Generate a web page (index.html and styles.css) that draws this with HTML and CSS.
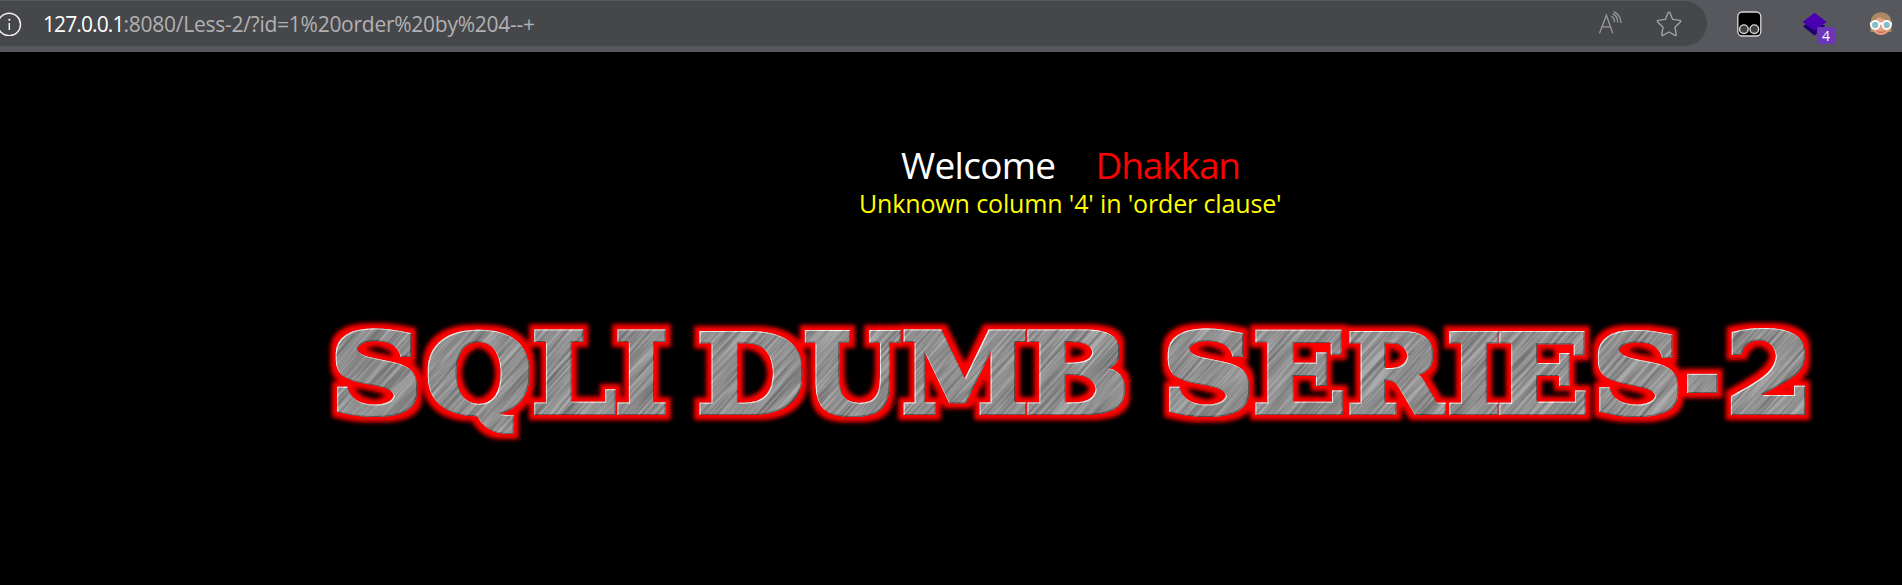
FILE: index.html
```html
<!DOCTYPE html>
<html lang="en">
<head>
<meta charset="utf-8">
<title>Less-2</title>
<link rel="stylesheet" href="styles.css">
</head>
<body>
<header class="toolbar">
  <div class="address">
    <svg class="info" width="22" height="26" viewBox="0 0 22 26"><circle cx="9.2" cy="14.500" r="11.300" fill="none" stroke="#f2f2f2" stroke-width="1.4"/><path d="M9.300 13v7" stroke="#f2f2f2" stroke-width="1.5"/><circle cx="9.300" cy="9.800" r="1.1" fill="#f2f2f2"/></svg>
    <div class="url"><span class="host">127.0.0.1</span><span class="path">:8080/Less-2/?id=1%20order%20by%204--+</span></div>
    <svg class="read" width="26" height="24" viewBox="0 0 26 24" fill="none" stroke="#98999b" stroke-width="1.3"><path d="M1.5 22.2 8.4 4.2l6.3 18M4 15.8h8.6M13.4 5.2c2.2 1.3 3.1 3.2 3.1 5.7M14.8 2.6c3.5 2 5 5 4.900 8.900M15.8.6c5 2.500 7 6.300 7.100 11.300"/></svg>
    <svg class="star" width="26" height="26" viewBox="0 0 26 26" fill="none" stroke="#a0a1a3" stroke-width="1.4" stroke-linejoin="round"><path d="M12.200 1.600Q13 .8 13.800 1.600L16.700 8.400 24 9.400Q25.200 10 24.300 11L19 16.200 20.300 23.600Q20.200 24.900 19 24.400L13 21 7 24.400Q5.800 24.900 5.700 23.600L7 16.200 1.700 11Q.8 10 2 9.400L9.300 8.400Z"/></svg>
  </div>
  <svg class="monkey" width="25" height="26" viewBox="0 0 25 26"><rect x=".8" y="1" width="23" height="24" rx="4.500" fill="#000" stroke="#d8d8d8" stroke-width="1.300"/><g fill="#3f4043" stroke="#d8d8d8" stroke-width="1.400"><circle cx="6.900" cy="18.200" r="4.300"/><circle cx="17.300" cy="18.200" r="4.300"/></g></svg>
  <div class="layers">
    <svg width="26" height="26" viewBox="0 0 26 26"><path d="M1 14.500 4 12l18 1 1 1-10.500 9.500Z" fill="#21006f"/><path d="M12.500.8 24.700 10 12.500 18.500.6 10Z" fill="#4a00b0"/></svg>
    <span class="badge">4</span>
  </div>
  <svg class="face" width="24" height="24" viewBox="0 0 24 24"><path d="M1.500 20V11C1.500-3.500 22.500-3.500 22.500 11v9Z" fill="#a98a62"/><path d="M3 10 10 5l11 5c1.500 8-3 13-9 13S1.500 18 3 10Z" fill="#e4a181"/><path d="M8 19.200q4 2.300 8 0" fill="none" stroke="#c96b50" stroke-width="1.300"/><path d="M1 11.500h22" stroke="#fff" stroke-width="2.200"/><g fill="#86bdc9" stroke="#fff" stroke-width="1.900"><circle cx="6.200" cy="13" r="4.100"/><circle cx="17.700" cy="13" r="4.100"/></g></svg>
</header>
<main class="page">
  <div class="greeting"><span class="welcome">Welcome</span><span class="name">Dhakkan</span></div>
  <p class="error">Unknown column '4' in 'order clause'</p>
  <svg class="banner" width="1902" height="150" viewBox="0 300 1902 150" role="img" aria-label="SQLI DUMB SERIES-2">
    <defs>
      <filter id="glow" filterUnits="userSpaceOnUse" x="300" y="300" width="1560" height="150" color-interpolation-filters="sRGB">
        <feMorphology in="SourceAlpha" operator="dilate" radius="5"/>
        <feGaussianBlur stdDeviation="2.300" result="b"/>
        <feFlood flood-color="#f00"/>
        <feComposite in2="b" operator="in" result="red"/>
        <feMerge><feMergeNode in="red"/><feMergeNode in="SourceGraphic"/></feMerge>
      </filter>
      <filter id="bevel" x="-10%" y="-10%" width="120%" height="120%" color-interpolation-filters="sRGB">
        <feMorphology in="SourceGraphic" operator="dilate" radius="1 3" result="slab"/>
        <feOffset in="slab" dx="1" dy="1" result="lo"/>
        <feFlood flood-color="#fff"/><feComposite in2="slab" operator="in"/><feComposite in2="lo" operator="out" result="light"/>
        <feOffset in="slab" dx="-.8" dy="-.8" result="hi"/>
        <feFlood flood-color="#4b4b4b"/><feComposite in2="slab" operator="in"/><feComposite in2="hi" operator="out" result="dark"/>
        <feMerge><feMergeNode in="slab"/><feMergeNode in="dark"/><feMergeNode in="light"/></feMerge>
      </filter>
      <filter id="brushed" filterUnits="userSpaceOnUse" x="-900" y="-900" width="1800" height="1800" color-interpolation-filters="sRGB">
        <feTurbulence type="fractalNoise" baseFrequency=".012 .36" numOctaves="3" seed="4"/>
        <feColorMatrix values="1.800 0 0 0 -.36  1.800 0 0 0 -.36  1.800 0 0 0 -.36  0 0 0 0 1"/>
      </filter>
      <mask id="letters" maskUnits="userSpaceOnUse" x="300" y="300" width="1560" height="150"><use href="#word" class="maskfill"/></mask>
    </defs>
    <g filter="url(#glow)">
      <g id="word" class="metal">
        <text transform="translate(328.1 412) scale(1.330 1.076)">S</text>
        <text transform="translate(423.600 412) scale(1.267 1.076)">Q</text>
        <text transform="translate(529.600 412) scale(1.248 1.076)">L</text>
        <text transform="translate(612.700 412) scale(1.227 1.076)">I</text>
        <text transform="translate(694.400 412) scale(1.293 1.076)">D</text>
        <text transform="translate(801.900 412) scale(1.147 1.076)">U</text>
        <text transform="translate(899.800 412) scale(1.182 1.076)">M</text>
        <text transform="translate(1022.500 412) scale(1.280 1.076)">B</text>
        <text transform="translate(1160.100 412) scale(1.330 1.076)">S</text>
        <text transform="translate(1250.500 412) scale(1.280 1.076)">E</text>
        <text transform="translate(1344.900 412) scale(1.192 1.076)">R</text>
        <text transform="translate(1444.600 412) scale(1.253 1.076)">I</text>
        <text transform="translate(1494.600 412) scale(1.265 1.076)">E</text>
        <text transform="translate(1590.200 412) scale(1.314 1.076)">S</text>
        <text transform="translate(1683.200 410) scale(.915 1)">-</text>
        <text transform="translate(1723.100 412) scale(1.337 1.076)">2</text>
      </g>
    </g>
    <g mask="url(#letters)" opacity=".24"><g transform="translate(1080 375) rotate(-48)"><rect x="-900" y="-900" width="1800" height="1800" filter="url(#brushed)"/></g></g>
  </svg>
</main>
</body>
</html>
```
FILE: styles.css
```css
body {
  margin: 0;
  background: #000;
  font-family: "Open Sans", "Noto Sans", sans-serif;
  overflow: hidden;
}
.toolbar {
  display: flex;
  align-items: flex-start;
  height: 52px;
  box-sizing: border-box;
  padding-top: 1px;
  background: #57585d;
}
.toolbar svg { display: block; flex: none; }
.address {
  display: flex;
  align-items: flex-start;
  box-sizing: border-box;
  width: 1707px;
  height: 45px;
  flex: none;
  background: #46474a;
  border-radius: 0 22.5px 22.5px 0;
}
.info { margin-top: 9px; }
.url {
  flex: 1;
  padding-left: 21px;
  font-size: 21px;
  line-height: 46px;
  white-space: nowrap;
}
.host { color: #fff; letter-spacing: -0.9px; }
.path { color: #b1b1b2; letter-spacing: -0.26px; }
.read { margin: 10px 32px 0 0; }
.star { margin: 10px 25px 0 0; }
.monkey { margin: 10px 0 0 30px; }
.layers {
  position: relative;
  margin: 11px 0 0 40px;
}
.badge {
  position: absolute;
  left: 15px;
  top: 15px;
  width: 18px;
  height: 17px;
  border-radius: 2px;
  background: #6937b8;
  color: #fff;
  font-size: 14px;
  line-height: 17px;
  text-align: center;
}
.face { margin: 11px 0 0 41px; }
.page { height: 533px; }
.greeting {
  display: flex;
  gap: 40px;
  padding: 87px 0 0 901px;
  font-size: 37px;
  line-height: 52px;
}
.welcome { color: #fff; letter-spacing: -0.7px; }
.name { color: #f00; letter-spacing: -1.1px; }
.error {
  margin: 0 0 0 859px;
  color: #ff0;
  font-size: 25px;
  line-height: 24px;
  letter-spacing: -0.14px;
  white-space: nowrap;
}
.banner { display: block; margin-top: 85px; }
.metal text {
  font-family: "DejaVu Serif", serif;
  font-weight: bold;
  font-size: 100px;
  fill: #929292;
  filter: url(#bevel);
}
.maskfill { filter: brightness(3); }
```
